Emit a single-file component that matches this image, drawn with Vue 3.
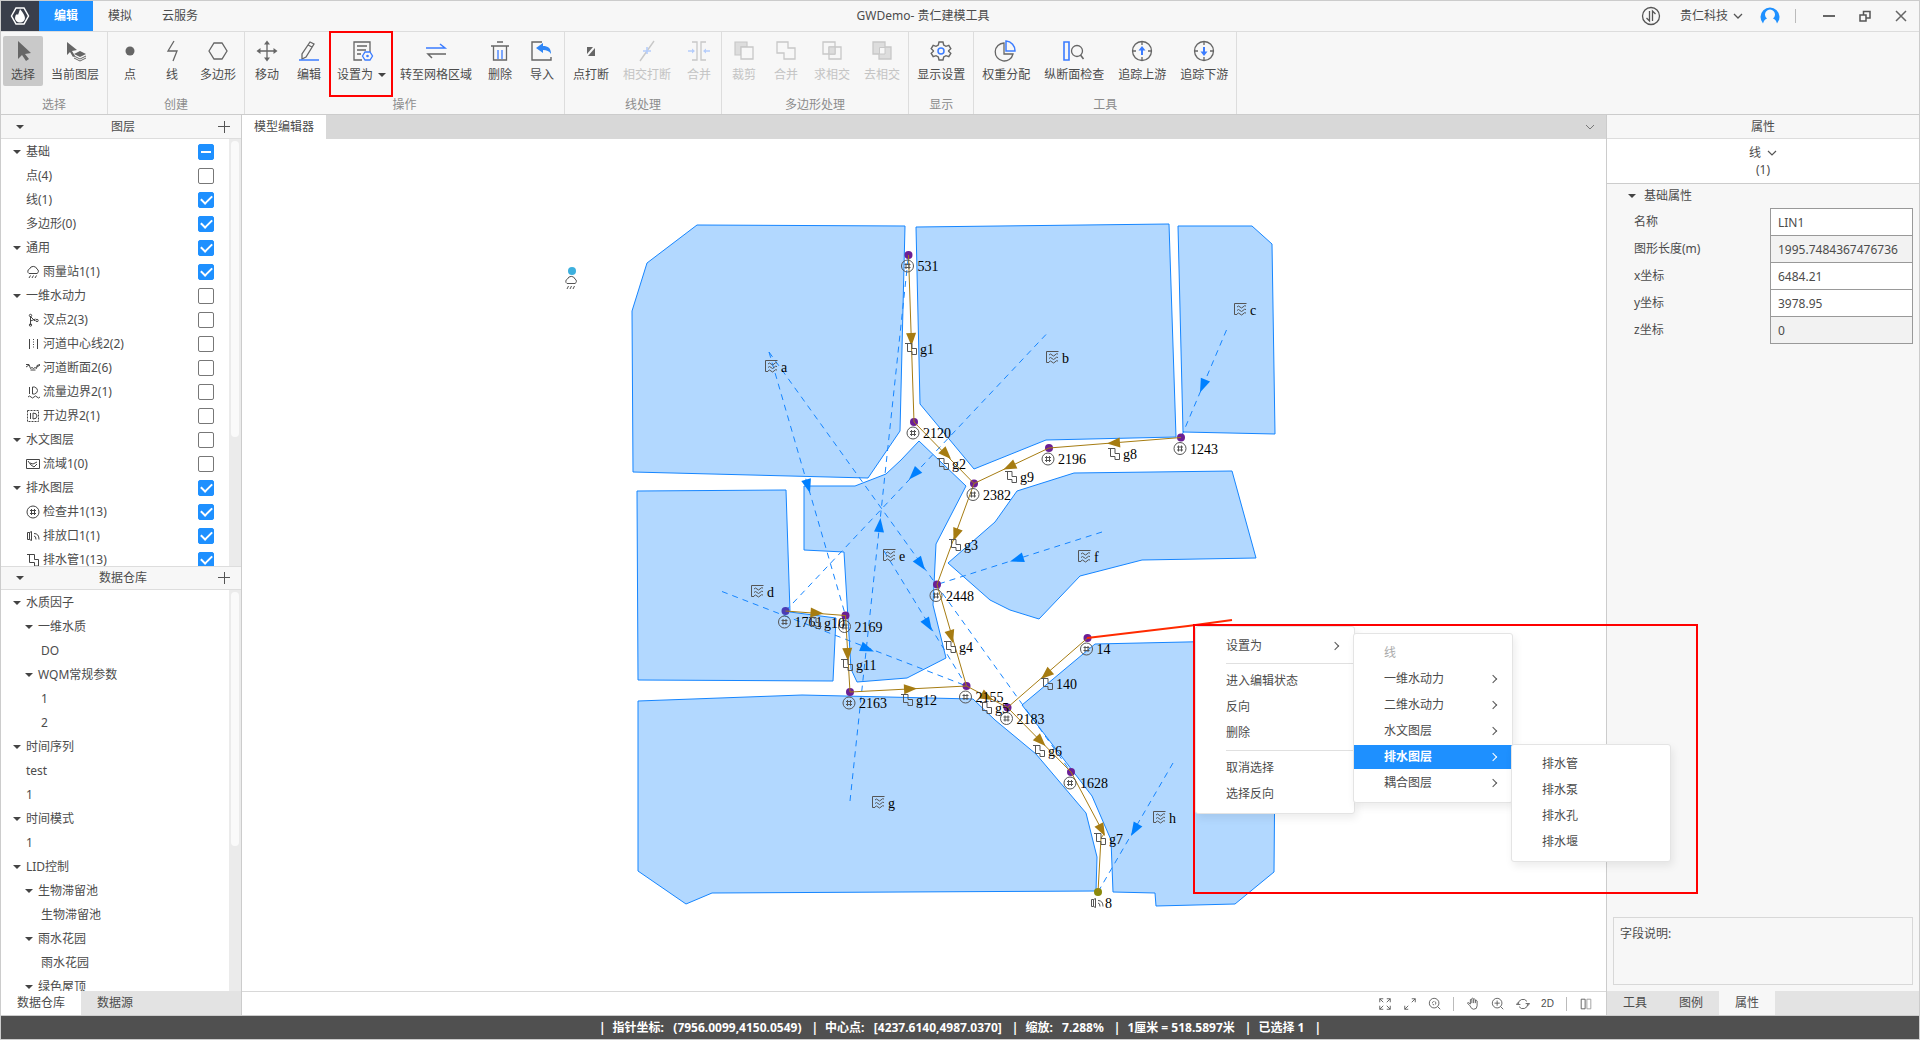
<script setup>
import { ref } from 'vue'

const G = '#666'
const B = '#3b7cff'
const LG = '#c8c8c8'
const LB = '#b5cdfb'

const toolIcons = {
  select: `<path d="M7 2v18l4-4 4 6 3-2-4-5 6-1z" fill="${G}"/>`,
  layer: `<path d="M4 3v13l3-3 3 5 2-1-3-5 5-1z" fill="${G}"/><path d="M17 12l6 3-6 3-6-3z" fill="${G}"/><path d="M11 17l6 3 6-3M11 19l6 3 6-3" stroke="${G}" fill="none"/>`,
  point: `<circle cx="12" cy="12" r="4.5" fill="${G}"/>`,
  line: `<path d="M14 2L8 12h9l-4 10" stroke="${G}" stroke-width="1.3" fill="none"/>`,
  polygon: `<path d="M3 12l5-8h8l5 8-5 8H8z" stroke="${G}" stroke-width="1.3" fill="none"/>`,
  move: `<path d="M12 4v16M4 12h16" stroke="${G}" stroke-width="1.3"/><path d="M12 1.500l3 4H9zM12 22.500l3-4H9zM1.500 12l4-3v6zM22.500 12l-4-3v6z" fill="${G}"/>`,
  edit: `<path d="M13 3l4 2-8 13-4 2 0-5zM11 6l4 2" stroke="${G}" stroke-width="1.3" fill="none"/><path d="M2 21h20" stroke="${B}" stroke-width="1.500"/>`,
  setAs: `<path d="M20 13V3H4v18h8M7 7h10M7 11h9M7 15h4" stroke="${G}" stroke-width="1.300" fill="none"/><path d="M12.500 17l2.500-4h5l2.500 4-2.500 4h-5z" fill="#f7f7f7" stroke="${B}" stroke-width="1.300"/><circle cx="17.500" cy="17" r="1.300" fill="${B}"/>`,
  goto: `<path d="M2 9h19l-5-4" stroke="${B}" stroke-width="1.500" fill="none"/><path d="M22 15H4l4 4" stroke="${G}" stroke-width="1.500" fill="none"/>`,
  remove: `<path d="M3 7h18M9 3h6M5.500 7v14h13V7" stroke="${G}" stroke-width="1.300" fill="none"/><path d="M10 11v9M14 11v9" stroke="${B}" stroke-width="1.300"/>`,
  import: `<path d="M12 3H2v18h19v-3" stroke="${G}" stroke-width="1.400" fill="none"/><path d="M6 9l7-5v3c5 0 8 2 8 8-2-3-4-4-8-4v3z" fill="#2f86f6"/>`,
  breakPoint: `<path d="M8 8h6l-6 7zM16 9v8H9z" fill="${G}"/>`,
  breakCross: `<path d="M19 2L5 22" stroke="${LG}" stroke-width="1.400"/><path d="M8 12h8M12 8v7" stroke="${LB}" stroke-width="1.600"/>`,
  mergeLine: `<path d="M5 3h5v18H5M19 3h-5v18h5" stroke="${LG}" stroke-width="1.300" fill="none"/><path d="M1 12h5M23 12h-5" stroke="${LB}" stroke-width="1.300"/><path d="M8 12L5 9.500v5zM16 12l3-2.500v5z" fill="${LB}"/>`,
  clip: `<path d="M3 3h12v5h-6v8H3z" fill="#ddd" stroke="${LG}" stroke-width="1.200"/><path d="M9 8h12v12H9z" fill="#f7f7f7" stroke="${LG}" stroke-width="1.300"/>`,
  union: `<path d="M3 3h11v6h7v11H10v-6H3z" fill="none" stroke="${LG}" stroke-width="1.300"/>`,
  intersect: `<path d="M3 3h12v12H3zM9 8h12v12H9z" fill="none" stroke="${LG}" stroke-width="1.300"/><path d="M9 8h6v7H9z" fill="#ddd" stroke="${LG}"/>`,
  subtract: `<path d="M3 3h12v5h6v12H9v-5H3z" fill="#ddd" stroke="${LG}" stroke-width="1.300"/><path d="M9.500 8.500h5.500v6.500H9.500z" fill="#f7f7f7" stroke="${LG}"/>`,
  gear: `<path d="M10 3h4l.7 3 2.300 1.300 2.800-1 2 3.400-2.200 2v.6l2.200 2-2 3.400-2.800-1-2.300 1.300-.7 3h-4l-.7-3L7 16.700l-2.800 1-2-3.400 2.200-2v-.6l-2.200-2 2-3.400 2.800 1L9.300 6z" stroke="${G}" stroke-width="1.400" fill="none"/><circle cx="12" cy="12" r="3" stroke="${B}" stroke-width="1.500" fill="none"/>`,
  weight: `<path d="M10 4a9 9 0 1 0 9 11h-9z" stroke="${G}" stroke-width="1.300" fill="none"/><path d="M12 2a9.500 9.500 0 0 1 9 10h-9z" stroke="${B}" stroke-width="1.500" fill="none"/>`,
  section: `<path d="M2 3h5v18H2z" stroke="${B}" stroke-width="1.600" fill="none"/><circle cx="15" cy="12" r="5.500" stroke="${G}" stroke-width="1.300" fill="none"/><path d="M18.500 16l3 4" stroke="${G}" stroke-width="1.600"/>`,
  up: `<circle cx="12" cy="12" r="9.500" stroke="${G}" stroke-width="1.300" fill="none"/><path d="M12 2v4M12 18v4M2 12h4M18 12h4" stroke="${G}" stroke-width="1.300"/><path d="M12 7l3.500 4.500H13V16h-2v-4.500H8.500z" fill="${B}"/>`,
  down: `<circle cx="12" cy="12" r="9.500" stroke="${G}" stroke-width="1.300" fill="none"/><path d="M12 2v4M12 18v4M2 12h4M18 12h4" stroke="${G}" stroke-width="1.300"/><path d="M12 17l3.500-4.500H13V8h-2v4.500H8.500z" fill="${B}"/>`,
}

const groups = [
  { name: '选择', tools: [{ t: '选择', i: 'select', active: true }, { t: '当前图层', i: 'layer' }] },
  { name: '创建', tools: [{ t: '点', i: 'point' }, { t: '线', i: 'line' }, { t: '多边形', i: 'polygon' }] },
  {
    name: '操作',
    tools: [
      { t: '移动', i: 'move' }, { t: '编辑', i: 'edit' }, { t: '设置为', i: 'setAs', caret: true },
      { t: '转至网格区域', i: 'goto' }, { t: '删除', i: 'remove' }, { t: '导入', i: 'import' },
    ],
  },
  { name: '线处理', tools: [{ t: '点打断', i: 'breakPoint' }, { t: '相交打断', i: 'breakCross', off: true }, { t: '合并', i: 'mergeLine', off: true }] },
  {
    name: '多边形处理',
    tools: [
      { t: '裁剪', i: 'clip', off: true }, { t: '合并', i: 'union', off: true },
      { t: '求相交', i: 'intersect', off: true }, { t: '去相交', i: 'subtract', off: true },
    ],
  },
  { name: '显示', tools: [{ t: '显示设置', i: 'gear' }] },
  { name: '工具', tools: [{ t: '权重分配', i: 'weight' }, { t: '纵断面检查', i: 'section' }, { t: '追踪上游', i: 'up' }, { t: '追踪下游', i: 'down' }] },
]

const layerIcons = {
  rain: '<path d="M3 8.500a2.500 2.500 0 0 1 .5-4.500 4 4 0 0 1 7.500 0 2.500 2.500 0 0 1 0 4.500zM3 13l1.500-2.500M6 13l1.500-2.500M9 13l1.500-2.500"/>',
  fork: '<path d="M4.500 3v9M4.500 8l5-2M5 4l4 4"/><circle cx="4.500" cy="2.500" r="1.200"/><circle cx="4.500" cy="12" r="1.200"/><circle cx="11" cy="7.500" r="1.200"/>',
  center: '<path d="M3.500 2v10M11.500 2v10"/><path d="M7.500 2v10" stroke-dasharray="1 1.500"/>',
  section: '<path d="M0 3.500h3l1.500 4 1.500-1 1.500 1 1.500-1 1.500 1L11 4.500l3-1M0 6l3-2M11 6l3-2M4.500 9h5"/>',
  flow: '<path d="M3.500 2v7M6.500 2v7h2q3-1 3-3.500T8.500 2zM2 12q1.500-2 3 0t3 0 3 0 3 0"/>',
  open: '<path d="M1.500 1.500h11v11h-11z" stroke-dasharray="2 1"/><path d="M4.500 4v6M7 4v6q4 0 4-3T7 4z"/>',
  basin: '<path d="M.5 2.500h13v9H.5zM2 4l3 4 3 2M4 6l3 1 4-2M8 10l3-3"/>',
  manhole: '<circle cx="7" cy="7" r="6"/><path d="M5.500 4v6M8.500 4v6M4 5.500h6M4 8.500h6"/>',
  outfall: '<path d="M1.500 3.500h2v7h-2zM3.500 3.500l2-1v9l-2-1M8 7q2 0 2 3.500M8 4.500q5 0 5 6"/>',
  pipe: '<path d="M1 1.500H8.500V6.500H12.500V13M3.500 1.500V9.500H8.500V13H12.500"/>',
}

const layers = ref([
  { t: '基础', head: true, state: 'mixed' },
  { t: '点(4)', on: false },
  { t: '线(1)', on: true },
  { t: '多边形(0)', on: true },
  { t: '通用', head: true, on: true },
  { t: '雨量站1(1)', i: 'rain', on: true },
  { t: '一维水动力', head: true, on: false },
  { t: '汊点2(3)', i: 'fork', on: false },
  { t: '河道中心线2(2)', i: 'center', on: false },
  { t: '河道断面2(6)', i: 'section', on: false },
  { t: '流量边界2(1)', i: 'flow', on: false },
  { t: '开边界2(1)', i: 'open', on: false },
  { t: '水文图层', head: true, on: false },
  { t: '流域1(0)', i: 'basin', on: false },
  { t: '排水图层', head: true, on: true },
  { t: '检查井1(13)', i: 'manhole', on: true },
  { t: '排放口1(1)', i: 'outfall', on: true },
  { t: '排水管1(13)', i: 'pipe', on: true },
])

const store = [
  { t: '水质因子', head: true, lv: 1 },
  { t: '一维水质', head: true, lv: 2 },
  { t: 'DO', lv: 3 },
  { t: 'WQM常规参数', head: true, lv: 2 },
  { t: '1', lv: 3 },
  { t: '2', lv: 3 },
  { t: '时间序列', head: true, lv: 1 },
  { t: 'test', lv: 1 },
  { t: '1', lv: 1 },
  { t: '时间模式', head: true, lv: 1 },
  { t: '1', lv: 1 },
  { t: 'LID控制', head: true, lv: 1 },
  { t: '生物滞留池', head: true, lv: 2 },
  { t: '生物滞留池', lv: 3 },
  { t: '雨水花园', head: true, lv: 2 },
  { t: '雨水花园', lv: 3 },
  { t: '绿色屋顶', head: true, lv: 2 },
]

const props = ref([
  { id: 'name', t: '名称', v: 'LIN1' },
  { id: 'length', t: '图形长度(m)', v: '1995.7484367476736', ro: true },
  { id: 'x', t: 'x坐标', v: '6484.21' },
  { id: 'y', t: 'y坐标', v: '3978.95' },
  { id: 'z', t: 'z坐标', v: '0', ro: true },
])

/* network geometry */
const areas = [
  '697,225 905,226 900,431 868,478 633,472 632,311 647,263',
  '916,227 1169,224 1176,437 1046,440 974,469 920,404',
  '1178,226 1252,226 1272,244 1275,434 1183,432',
  '1232,471 1256,558 1142,560 1080,576 1039,619 1010,610 990,600 948,563 995,522 1017,491 1074,473',
  '637,491 786,490 790,612 836,618 833,681 638,680',
  '804,486 855,486 886,474 901,460 919,441 966,486 936,544 933,605 946,658 907,678 857,682 851,669 844,552 804,550',
  '638,701 802,695 973,699 995,720 1036,754 1086,813 1097,857 1096,891 712,893 686,904 638,871',
  '1095,644 1022,705 1092,796 1111,840 1113,892 1155,893 1156,906 1235,904 1274,872 1276,640',
]

const nodes = [
  { t: '531', x: 908.5, y: 255 }, { t: '2120', x: 914, y: 422 }, { t: '2382', x: 974, y: 483.5 },
  { t: '2196', x: 1049, y: 448 }, { t: '1243', x: 1181, y: 437.5 }, { t: '2448', x: 937, y: 584.5 },
  { t: '2155', x: 966.5, y: 686 }, { t: '2183', x: 1007.5, y: 707.5 }, { t: '1628', x: 1071, y: 772 },
  { t: '14', x: 1087.5, y: 638 }, { t: '2163', x: 850, y: 692 }, { t: '2169', x: 845.5, y: 615.5 },
  { t: '1761', x: 785.5, y: 611, c: '#4b3bb5' },
]

const pipes = [
  { t: 'g1', p: [908.5, 255, 914, 422], tip: [911.5, 346], l: [911, 349] },
  { t: 'g2', p: [914, 422, 974, 483.5], tip: [951, 459], l: [943, 464] },
  { t: 'g9', p: [1049, 448, 974, 483.5], tip: [1003.5, 469.5], l: [1011, 477] },
  { t: 'g8', p: [1181, 437.5, 1049, 448], tip: [1107, 443.5], l: [1114, 454] },
  { t: 'g3', p: [974, 483.5, 937, 584.5], tip: [953.5, 541], l: [955, 545] },
  { t: 'g4', p: [937, 584.5, 966.5, 686], tip: [953, 643], l: [950, 647] },
  { t: 'g5', p: [966.5, 686, 1007.5, 707.5], tip: [993, 700], l: [986, 708] },
  { t: 'g6', p: [1007.5, 707.5, 1071, 772], tip: [1045.5, 746], l: [1039, 751] },
  { t: 'g7', p: [1071, 772, 1104, 834], tip: [1105, 836], l: [1100, 839] },
  { t: '140', p: [1087.5, 638, 1007.5, 707.5], tip: [1041, 679], l: [1047, 684] },
  { t: 'g10', p: [785.5, 611, 845.5, 615.5], tip: [823.5, 613.5], l: [815, 623] },
  { t: 'g11', p: [845.5, 615.5, 850, 692], tip: [848, 661], l: [847, 665] },
  { t: 'g12', p: [850, 692, 966.5, 686], tip: [917, 688.5], l: [907, 700] },
]

const links = [
  { p: [769, 352, 845.5, 615.5], tip: [810, 493] },
  { p: [769, 352, 1071, 772], tip: [925, 570] },
  { p: [884, 551, 966.5, 686], tip: [932, 631] },
  { p: [850, 801, 908.5, 255], tip: [880.5, 518] },
  { p: [1046, 334.5, 785.5, 611], tip: [909, 479.5] },
  { p: [1226.5, 330, 1181, 437.5], tip: [1200, 392.5] },
  { p: [1102, 532, 937, 584.5], tip: [1010, 561.5] },
  { p: [722, 591.5, 966.5, 686], tip: [874, 651.5] },
  { p: [1173, 763, 1098, 892], tip: [1131, 836] },
]

const catchments = [
  { t: 'a', x: 771, y: 366 }, { t: 'b', x: 1052, y: 357 }, { t: 'c', x: 1240, y: 309 }, { t: 'd', x: 757, y: 591 },
  { t: 'e', x: 889, y: 555 }, { t: 'f', x: 1084, y: 556 }, { t: 'g', x: 878, y: 802 }, { t: 'h', x: 1159, y: 817 },
]

const angle = ([x1, y1, x2, y2]) => (Math.atan2(y2 - y1, x2 - x1) * 180) / Math.PI
const arrowAt = (o) => `translate(${o.tip[0]} ${o.tip[1]}) rotate(${angle(o.p)})`

const viewIcons = {
  full: '<path d="M2 6V2h4M10 2h4v4M14 10v4h-4M6 14H2v-4M2 2l4 4M14 2l-4 4M14 14l-4-4M2 14l4-4"/>',
  expand: '<path d="M10 2h4v4M14 2l-4 4M6 14H2v-4M2 14l4-4"/>',
  fit: '<circle cx="7" cy="7" r="5.500"/><circle cx="7" cy="7" r="2" stroke-dasharray="2 1"/><path d="M11 11l3 3"/>',
  pan: '<path d="M4.500 10L2 7.500q-.5-1.500 1-1L5 8V3q1-1.500 1.700 0V2q1-1.500 2 0v1q1-1.500 2 0v1.500q1-1.500 2 0V10q0 4-4 4-2.500 0-4.200-4zM6.700 3v4M8.700 3v4M10.700 4v3"/>',
  zoom: '<circle cx="7" cy="7" r="5.500"/><path d="M4 7h6M7 4v6M11 11l3 3"/>',
  rotate: '<path d="M2.500 8a5.500 5.500 0 0 1 10-3M13.500 8a5.500 5.500 0 0 1-10 3M11 7.500h4.500L13.500 10M5 8.500H.5L2.500 6"/>',
  split: '<path d="M7 2.500H2.500v11H7z"/><path d="M9 2.500h4.500v11H9z" stroke="#999"/>',
}
const views = ['full', 'expand', 'fit', '|', 'pan', 'zoom', 'rotate', '2D', '|', 'split']

const menu1 = ['设置为', '-', '进入编辑状态', '反向', '删除', '-', '取消选择', '选择反向']
const menu2 = ['一维水动力', '二维水动力', '水文图层', '排水图层', '耦合图层']
const menu3 = ['排水管', '排水泵', '排水孔', '排水堰']

const status = ['指针坐标:   (7956.0099,4150.0549)', '中心点:   [4237.6140,4987.0370]', '缩放:   7.288%', '1厘米 = 518.5897米', '已选择 1']
</script>

<template>
  <div class="app">
    <header class="title-bar">
      <div class="logo">
        <svg width="20" height="20" viewBox="0 0 20 20"><path d="M1.500 10l4.500-8h8l4.500 8-4.500 8H6z" fill="none" stroke="#fff" stroke-width="1.500" /><path d="M10 3q5 6 5 9a5 4.500 0 0 1-10 0q0-3 2-4l1 1q1-3 2-6z" fill="#fff" /></svg>
      </div>
      <nav class="main-tabs">
        <button class="main-tab active">编辑</button>
        <button class="main-tab">模拟</button>
        <button class="main-tab">云服务</button>
      </nav>
      <h1 class="title">GWDemo- 贵仁建模工具</h1>
      <div class="window-tools">
        <button aria-label="同步" class="sync"><svg width="20" height="20" viewBox="0 0 20 20" fill="none" stroke="#555" stroke-width="1.300"><circle cx="10" cy="10" r="8.500" /><path d="M8.500 5v10l-3-3M11.500 15V5l3 3" /></svg></button>
        <button class="account">贵仁科技 <svg width="10" height="8" viewBox="0 0 10 8" fill="none" stroke="#555" stroke-width="1.300"><path d="M1 2l4 4 4-4" /></svg></button>
        <button aria-label="用户"><svg width="20" height="20" viewBox="0 0 20 20"><path d="M3 17.500a9.500 9.500 0 1 1 14 0q-1-4-4-5a5 5 0 1 0-6 0q-3 1-4 5z" fill="#1e90ff" /><circle cx="10" cy="9" r="3.500" fill="#f7f7f7" /></svg></button>
        <span class="bar"></span>
        <button class="win" aria-label="最小化"><svg width="12" height="12" viewBox="0 0 12 12"><path d="M0 6h12" stroke="#666" stroke-width="2" /></svg></button>
        <button class="win" aria-label="还原"><svg width="12" height="12" viewBox="0 0 12 12" fill="none" stroke="#555" stroke-width="1.500"><path d="M1 5h6v6H1zM4.500 5V1.500h6.500V8H7" /></svg></button>
        <button class="win" aria-label="关闭"><svg width="12" height="12" viewBox="0 0 12 12" stroke="#666" stroke-width="1.500"><path d="M1 1l10 10M11 1L1 11" /></svg></button>
      </div>
    </header>

    <section class="ribbon">
      <div v-for="g in groups" :key="g.name" class="group">
        <div class="tools">
          <button v-for="t in g.tools" :key="t.i" class="tool" :class="{ active: t.active }" :disabled="t.off">
            <svg width="24" height="24" viewBox="0 0 24 24" v-html="toolIcons[t.i]"></svg>
            <span>{{ t.t }}<i v-if="t.caret" class="caret"></i></span>
          </button>
        </div>
        <div class="group-name">{{ g.name }}</div>
      </div>
    </section>

    <main class="body">
      <aside class="left">
        <div class="panel-head"><i class="caret"></i><h2>图层</h2><button class="plus" aria-label="添加图层"></button></div>
        <div class="scroll layers">
          <ul class="tree">
            <li v-for="(l, n) in layers" :key="n">
              <label class="row" :class="{ leaf: !l.head }">
                <i v-if="l.head" class="caret"></i>
                <svg v-if="l.i" class="layer-icon" width="14" height="14" viewBox="0 0 14 14" v-html="layerIcons[l.i]"></svg>
                <span class="row-text">{{ l.t }}</span>
                <input v-model="l.on" type="checkbox" :class="{ mixed: l.state === 'mixed' }" />
              </label>
            </li>
          </ul>
          <div class="track"><div class="thumb thumb-layers"></div></div>
        </div>
        <div class="panel-head second"><i class="caret"></i><h2>数据仓库</h2><button class="plus" aria-label="添加数据"></button></div>
        <div class="scroll store">
          <ul class="tree">
            <li v-for="(s, n) in store" :key="n" class="row" :class="['lv' + s.lv, { leaf: !s.head }]">
              <i v-if="s.head" class="caret"></i><span>{{ s.t }}</span>
            </li>
          </ul>
          <div class="track"><div class="thumb thumb-store"></div></div>
        </div>
        <div class="foot-tabs left-tabs">
          <button class="active">数据仓库</button>
          <button>数据源</button>
        </div>
      </aside>

      <section class="center">
        <div class="doc-tabs">
          <button class="doc-tab">模型编辑器</button>
          <button class="more" aria-label="更多"><svg width="10" height="8" viewBox="0 0 10 8" fill="none" stroke="#777"><path d="M1 2l4 4 4-4" /></svg></button>
        </div>
        <div class="canvas">
          <svg width="100%" height="100%">
            <g transform="translate(-242 -139)">
              <polygon v-for="(a, n) in areas" :key="'a' + n" :points="a" class="area" />
              <g v-for="(l, n) in links" :key="'l' + n">
                <line :x1="l.p[0]" :y1="l.p[1]" :x2="l.p[2]" :y2="l.p[3]" class="link" />
                <path d="M0 0L-14 -5V5z" fill="#0080ff" :transform="arrowAt(l)" />
              </g>
              <circle v-for="d in nodes" :key="d.t" :cx="d.x" :cy="d.y" r="4" :fill="d.c || '#6b1f95'" />
              <circle cx="1098" cy="892" r="4" fill="#8a8a0c" />
              <g v-for="p in pipes" :key="p.t">
                <line :x1="p.p[0]" :y1="p.p[1]" :x2="p.p[2]" :y2="p.p[3]" class="pipe" />
                <path d="M0 0L-13 -5V5z" fill="#a67c12" :transform="arrowAt(p)" />
              </g>
              <path d="M1104 834L1101 838L1098 892" class="pipe" />
              <path d="M1087 638L1188 626L1232 620" class="picked" />
              <g v-for="d in nodes" :key="'n' + d.t" :transform="`translate(${d.x} ${d.y})`">
                <g class="mark"><circle cx="-1" cy="11" r="6" /><path d="M-2.500 8v6M.5 8v6M-4 9.500h6M-4 12.500h6" /></g>
                <text x="9" y="16">{{ d.t }}</text>
              </g>
              <g v-for="p in pipes" :key="'p' + p.t" :transform="`translate(${p.l[0]} ${p.l[1]})`">
                <path class="mark" d="M-6 -5.500H1V-.5H5.500V5.500M-3.500 -5.500V2.500H1V5.500H5.500" />
                <text x="9" y="5">{{ p.t }}</text>
              </g>
              <g v-for="c in catchments" :key="'c' + c.t" :transform="`translate(${c.x} ${c.y})`">
                <path class="mark" d="M6.500 -5.500H-5.500V5.500H-3" />
                <path class="mark" d="M-3 -2q1.500-2 3 0t3 0 3-1M-3 1.500q1.500-2 3 0t3 0 3-1M-3 5q1.500-2 3 0t3 0 3-1" />
                <text x="10" y="6">{{ c.t }}</text>
              </g>
              <path class="mark" transform="translate(1090 896)" d="M1.500 3.500h2v7h-2zM3.500 3.500l2-1v9l-2-1M8 7q2 0 2 3.500M8 4.500q5 0 5 6" />
              <text x="1105" y="908">8</text>
              <circle cx="572" cy="271" r="4" fill="#3db0de" />
              <path class="mark" transform="translate(564 275)" d="M3 8.500a2.500 2.500 0 0 1 .5-4.500 4 4 0 0 1 7.500 0 2.500 2.500 0 0 1 0 4.500zM3 14l1.500-3M6 14l1.500-3M9 14l1.500-3" />
            </g>
          </svg>
        </div>
        <div class="view-bar">
          <template v-for="(v, n) in views" :key="n">
            <span v-if="v === '|'" class="bar"></span>
            <button v-else-if="v === '2D'" class="two-d">2D</button>
            <button v-else :aria-label="v"><svg width="16" height="16" viewBox="0 0 16 16" v-html="viewIcons[v]"></svg></button>
          </template>
        </div>
      </section>

      <aside class="right">
        <div class="panel-head"><h2>属性</h2></div>
        <div class="kind">
          <button>线 <svg width="10" height="8" viewBox="0 0 10 8" fill="none" stroke="#555" stroke-width="1.200"><path d="M1 2l4 4 4-4" /></svg></button>
          <span>(1)</span>
        </div>
        <form class="props" @submit.prevent>
          <h3><i class="caret"></i>基础属性</h3>
          <div v-for="p in props" :key="p.id" class="prop">
            <label :for="p.id">{{ p.t }}</label>
            <input :id="p.id" v-model="p.v" type="text" :readonly="p.ro" />
          </div>
        </form>
        <div class="desc">字段说明:</div>
        <div class="foot-tabs right-tabs">
          <button>工具</button>
          <button>图例</button>
          <button class="active">属性</button>
        </div>
      </aside>
    </main>

    <footer class="status">
      <span>|</span>
      <template v-for="s in status" :key="s"><span class="stat">{{ s }}</span><span>|</span></template>
    </footer>

    <div class="mark-box mark-tool"></div>
    <div class="mark-box mark-menu"></div>

    <div class="menu menu-1" role="menu">
      <template v-for="(m, n) in menu1" :key="n">
        <hr v-if="m === '-'" />
        <button v-else role="menuitem">{{ m }}<i v-if="n === 0" class="chev"></i></button>
      </template>
    </div>
    <div class="menu menu-2" role="menu">
      <button role="menuitem" disabled>线</button>
      <button v-for="m in menu2" :key="m" role="menuitem" :class="{ active: m === '排水图层' }">{{ m }}<i class="chev"></i></button>
    </div>
    <div class="menu menu-3" role="menu">
      <button v-for="m in menu3" :key="m" role="menuitem">{{ m }}</button>
    </div>
  </div>
</template>

<style>
body {
  margin: 0;
}
</style>

<style scoped>
* {
  box-sizing: border-box;
}
.app {
  position: relative;
  display: flex;
  flex-direction: column;
  height: 100vh;
  border: 1px solid #ccc;
  background: #f7f7f7;
  color: #4c4c4c;
  font: 12px/16px "Noto Sans", "Noto Sans CJK SC", sans-serif;
  overflow: hidden;
}
button {
  font: inherit;
  color: inherit;
  background: none;
  border: 0;
  padding: 0;
  white-space: nowrap;
}
h1, h2, h3, ul {
  margin: 0;
  padding: 0;
  font: inherit;
  list-style: none;
}
svg {
  display: block;
}
.caret {
  display: block;
  width: 8px;
  border: 4px solid transparent;
  border-top-color: #444;
  border-bottom: 0;
  flex: none;
}
.bar {
  width: 1px;
  height: 14px;
  background: #bbb;
}

.title-bar {
  display: flex;
  align-items: center;
  height: 31px;
  flex: none;
  border-bottom: 1px solid #ddd;
}
.logo {
  display: grid;
  place-items: center;
  width: 38px;
  height: 30px;
  background: #3a3f4b;
}
.main-tabs {
  display: flex;
  height: 30px;
}
.main-tab {
  padding: 0 15px;
}
.main-tab.active {
  background: #1e90ff;
  color: #fff;
  font-weight: 700;
}
.title {
  flex: 1;
  padding-right: 8px;
  text-align: center;
}
.window-tools {
  display: flex;
  align-items: center;
}
.sync {
  margin-right: 19px;
}
.account {
  display: flex;
  align-items: center;
  gap: 5px;
  margin-right: 17px;
}
.window-tools .bar {
  margin: 0 15px;
}
.win {
  display: grid;
  place-items: center;
  width: 36px;
  height: 30px;
}

.ribbon {
  display: flex;
  height: 83px;
  flex: none;
  border-bottom: 1px solid #ccc;
}
.group {
  display: flex;
  flex-direction: column;
  padding: 4px 1px 0;
  border-right: 1px solid #ddd;
}
.tools {
  display: flex;
}
.tool {
  display: flex;
  flex-direction: column;
  align-items: center;
  min-width: 40px;
  height: 50px;
  margin: 0 1px;
  padding: 3px 6px 0;
  border-radius: 2px;
}
.tool span {
  display: flex;
  align-items: center;
  margin-top: 4px;
}
.tool .caret {
  margin-left: 5px;
}
.tool.active {
  background: #c9c9c9;
}
.tool:disabled {
  color: #c4c4c4;
}
.group-name {
  margin-top: 11px;
  text-align: center;
  color: #8c8c8c;
}

.body {
  display: flex;
  flex: 1;
  min-height: 0;
}
.left {
  display: flex;
  flex-direction: column;
  width: 241px;
  flex: none;
  border-right: 1px solid #ccc;
}
.panel-head {
  display: flex;
  align-items: center;
  height: 24px;
  flex: none;
  padding: 0 11px 0 15px;
  border-bottom: 1px solid #ddd;
}
.panel-head.second {
  border-top: 1px solid #ddd;
}
.right .panel-head {
  padding-left: 11px;
}
.panel-head h2 {
  flex: 1;
  text-align: center;
}
.left h2 {
  padding-left: 4px;
}
.plus {
  width: 12px;
  height: 12px;
  background:
    linear-gradient(#555, #555) center / 12px 1px no-repeat,
    linear-gradient(#555, #555) center / 1px 12px no-repeat;
}
.scroll {
  display: flex;
  min-height: 0;
  background: #fff;
  overflow: hidden;
}
.layers {
  flex: 17 1 0;
}
.store {
  flex: 16 1 0;
}
.tree {
  flex: 1;
  padding-top: 1px;
}
.row {
  display: flex;
  align-items: center;
  height: 24px;
  gap: 5px;
  padding: 0 15px 0 12px;
}
.row.leaf {
  gap: 3px;
  padding-left: 25px;
}
.row.lv2 {
  padding-left: 24px;
}
.row.lv3 {
  padding-left: 40px;
}
.row-text {
  flex: 1;
}
.layer-icon {
  fill: none;
  stroke: #444;
}
.row input {
  display: grid;
  place-items: center;
  appearance: none;
  width: 16px;
  height: 16px;
  margin: 0;
  border: 1px solid #777;
  border-radius: 2px;
  background: #fff;
}
.row input:checked,
.row input.mixed {
  border-color: #1e90ff;
  background: #1e90ff;
}
.row input:checked::after {
  content: "";
  width: 9px;
  height: 5px;
  margin-bottom: 3px;
  border: 2px solid #fff;
  border-top: 0;
  border-right: 0;
  transform: rotate(-45deg);
}
.row input.mixed::after {
  content: "";
  width: 10px;
  height: 2px;
  background: #fff;
}
.track {
  width: 12px;
  padding: 2px;
  background: #ebebeb;
}
.thumb {
  border-radius: 4px;
  background: #fafafa;
}
.thumb-layers {
  height: 70%;
}
.thumb-store {
  height: 64%;
}
.foot-tabs {
  display: flex;
  height: 25px;
  flex: none;
  background: #e3e3e3;
  border-bottom: 1px solid #ccc;
}
.foot-tabs button {
  padding: 0 16px;
}
.foot-tabs .active {
  background: #f7f7f7;
}
.left-tabs .active {
  background: #fff;
}

.center {
  display: flex;
  flex-direction: column;
  flex: 1;
  min-width: 0;
  background: #fff;
}
.doc-tabs {
  display: flex;
  justify-content: space-between;
  height: 24px;
  flex: none;
  background: #d8d8d8;
}
.doc-tab {
  padding: 0 12px;
  background: #fff;
}
.more {
  padding: 0 11px;
}
.canvas {
  flex: 1;
  min-height: 0;
  overflow: hidden;
}
.area {
  fill: #b2d8ff;
  stroke: #1585ff;
}
.link {
  stroke: #1585ff;
  stroke-dasharray: 6 5;
}
.pipe {
  fill: none;
  stroke: #a67c12;
}
.picked {
  fill: none;
  stroke: #ff2a00;
  stroke-width: 2;
}
.mark {
  fill: none;
  stroke: #555;
}
.canvas text {
  font: 14px "Liberation Serif", serif;
  fill: #000;
}
.view-bar {
  display: flex;
  align-items: center;
  justify-content: flex-end;
  height: 25px;
  flex: none;
  padding-right: 8px;
  border-top: 1px solid #d8d8d8;
  border-bottom: 1px solid #ccc;
}
.view-bar button {
  display: grid;
  place-items: center;
  width: 25px;
}
.view-bar svg {
  width: 14px;
  height: 14px;
  fill: none;
  stroke: #555;
}
.view-bar .bar {
  margin: 0 6px;
}
.view-bar .two-d {
  font: 10px/16px "Liberation Sans", sans-serif;
}

.right {
  display: flex;
  flex-direction: column;
  width: 313px;
  flex: none;
  border-left: 1px solid #ccc;
}
.kind {
  display: flex;
  flex-direction: column;
  align-items: center;
  height: 45px;
  flex: none;
  padding-top: 5px;
  background: #fff;
  border-bottom: 1px solid #ccc;
}
.kind button {
  display: flex;
  align-items: center;
  gap: 6px;
  height: 18px;
}
.props {
  flex: 1;
  padding-right: 6px;
}
.props h3 {
  display: flex;
  align-items: center;
  gap: 8px;
  height: 24px;
  padding-left: 21px;
}
.prop {
  display: flex;
  align-items: center;
  justify-content: space-between;
  height: 27px;
  padding-left: 27px;
}
.prop input {
  width: 143px;
  height: 28px;
  margin: 0 0 -1px;
  padding: 0 7px;
  border: 1px solid #999;
  background: #fff;
  font: inherit;
  color: inherit;
}
.prop input:read-only {
  background: #f2f2f2;
}
.desc {
  height: 68px;
  flex: none;
  margin: 0 6px 6px;
  padding: 8px 6px;
  border: 1px solid #d8d8d8;
}

.status {
  display: flex;
  align-items: center;
  justify-content: center;
  gap: 7px;
  height: 23px;
  flex: none;
  background: #505050;
  color: #fff;
  font-weight: 700;
}
.stat {
  padding-right: 3px;
  white-space: pre;
}

.mark-box {
  position: absolute;
  border: 2px solid #f00;
  pointer-events: none;
}
.mark-tool {
  left: 328px;
  top: 30px;
  width: 64px;
  height: 66px;
}
.mark-menu {
  left: 1192px;
  top: 623px;
  width: 505px;
  height: 270px;
}
.menu {
  position: absolute;
  display: flex;
  flex-direction: column;
  width: 160px;
  padding: 6px 0;
  border: 1px solid #e4e4e4;
  border-radius: 3px;
  background: #fff;
  box-shadow: 2px 4px 8px rgba(0, 0, 0, 0.08);
}
.menu-1 {
  left: 1194px;
  top: 625px;
}
.menu-2 {
  left: 1352px;
  top: 632px;
}
.menu-3 {
  left: 1510px;
  top: 743px;
}
.menu button {
  display: flex;
  align-items: center;
  justify-content: space-between;
  height: 24px;
  margin: 1px 0;
  padding: 0 16px 0 30px;
}
.menu button:disabled {
  color: #aaa;
}
.menu button.active {
  background: #1e90ff;
  color: #fff;
  font-weight: 700;
}
.menu hr {
  height: 1px;
  margin: 4px 0 4px 30px;
  border: 0;
  background: #e0e0e0;
}
.chev {
  width: 6px;
  height: 6px;
  border: 1px solid #555;
  border-width: 1px 1px 0 0;
  transform: rotate(45deg);
}
.active .chev {
  border-color: #fff;
}
</style>
